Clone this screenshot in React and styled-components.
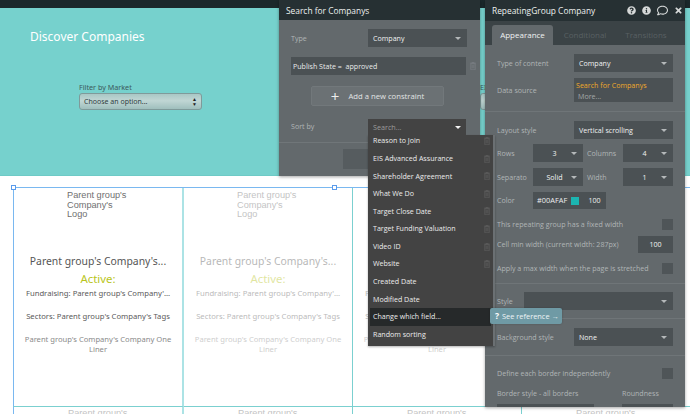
import React from 'react';
import styled, { createGlobalStyle } from 'styled-components';
import { FaQuestionCircle, FaInfoCircle, FaRegComment, FaTimes } from 'react-icons/fa';

const Global = createGlobalStyle`
  html, body { margin: 0; padding: 0; background: #fff; }
  body { width: 690px; height: 414px; overflow: hidden; font-family: "Open Sans", sans-serif; }
  * { box-sizing: border-box; }
`;

const Page = styled.div`
  position: relative;
  width: 690px;
  height: 414px;
  overflow: hidden;
  background: #fff;
`;
const TopBar = styled.div`height: 8px; background: #1b282b;`;
const Hero = styled.header`
  height: 168px;
  background: #76d1cd;
  border-bottom: 1px solid #6ecac6;
  padding: 20px 0 0 30px;
`;
const HeroTitle = styled.h1`
  margin: 0;
  font: 400 12px/18px "Noto Sans", sans-serif;
  color: #fff;
`;
const Filters = styled.div`
  display: flex;
  gap: 278px;
  margin: 36px 0 0 49px;
`;
const Filter = styled.div`width: 123px; flex: none;`;
const FilterLabel = styled.div`
  font: 7.2px/11px "Noto Sans", sans-serif;
  color: #3c5a5c;
  height: 11px;
`;
const FakeSelect = styled.div`
  height: 17px;
  border: 1px solid #7f9a9a;
  border-radius: 3px;
  background: linear-gradient(#a9c7c5, #c0d6d4 45%, #9fbfbd);
  font: 7px/15px "Noto Sans", sans-serif;
  color: #2f3d3e;
  padding: 0 4px;
  display: flex;
  justify-content: space-between;
`;
const Spinner = styled.span`
  font-size: 5px;
  line-height: 5px;
  padding-top: 3px;
  color: #222;
  text-align: center;
`;
const Grid = styled.section`
  position: relative;
  margin: 11px 0 0 13px;
  width: 678px;
  display: grid;
  grid-template-columns: 171px 169px 169px 169px;
  border-top: 1px solid #7ab8f0;
`;
const Cell = styled.article`
  height: 219px;
  border-right: ${p => (p.$thick ? '2px solid #ace3e5' : '1px solid #7bd0d0')};
  border-left: ${p => (p.$first ? '1px solid #7ab8f0' : '0')};
  border-bottom: 1px solid #7bd0d0;
  display: flex;
  flex-direction: column;
  align-items: center;
  text-align: center;
  padding: 3px 8px 0 8px;
  & > * { opacity: ${p => p.$dim}; }
`;
const Logo = styled.div`
  align-self: flex-start;
  margin-left: 45px;
  width: 66px;
  text-align: left;
  font: 9.2px/9.6px "Liberation Sans", sans-serif;
  color: #707070;
`;
const CellTitle = styled.div`
  margin-top: 33px;
  font: 10.4px/16px "Noto Sans", sans-serif;
  color: #555;
  white-space: nowrap;
`;
const Status = styled.div`
  margin-top: 2px;
  font: 400 11.4px/16px "Noto Sans", sans-serif;
  color: #b9c51c;
`;
const Meta = styled.div`
  margin-top: ${p => p.$mt}px;
  font: 7.7px/11px "Noto Sans", sans-serif;
  color: #5a5a5a;
  white-space: nowrap;
`;
const Liner = styled.div`
  margin-top: 12px;
  font: 7.6px/10px "Noto Sans", sans-serif;
  color: #8a8a8a;
  width: 150px;
`;
const NextRow = styled.div`
  font: 9.2px/10px "Liberation Sans", sans-serif;
  color: #c4c4c4;
  padding: 1px 0 0 54px;
  white-space: nowrap;
  overflow: hidden;
  height: 7px;
  border-right: ${p => (p.$thick ? '2px solid #ace3e5' : '1px solid #7bd0d0')};
  border-left: ${p => (p.$first ? '1px solid #7ab8f0' : '0')};
`;
const Handle = styled.span`
  position: absolute;
  top: -3px;
  left: ${p => p.$x}px;
  width: 5px;
  height: 5px;
  background: #fff;
  border: 1px solid #5a9bec;
`;

const Window = styled.aside`
  position: absolute;
  left: ${p => p.$x}px;
  top: 0;
  width: ${p => p.$w}px;
  height: ${p => p.$h}px;
  background: #63696c;
  box-shadow: 0 1px 3px rgba(0,0,0,.35);
  color: #e8eaea;
  font: 7.1px/11px "Open Sans", sans-serif;
  display: flex;
  flex-direction: column;
`;
const WinHead = styled.div`
  height: ${p => p.$h}px;
  flex: none;
  background: #263033;
  padding-left: ${p => p.$pl}px;
  display: flex;
  align-items: center;
  justify-content: space-between;
  font-size: 8.4px;
  color: #eef0f0;
  white-space: nowrap;
`;
const HeadIcons = styled.div`
  display: flex;
  align-items: center;
  gap: 6px;
  padding-right: 2px;
  color: #d5d8d8;
  font-size: 9px;
  & svg { display: block; }
`;
const Tabs = styled.div`
  height: 24px;
  flex: none;
  background: #3b4346;
  display: flex;
  align-items: flex-end;
  padding-left: 7px;
`;
const Tab = styled.div`
  height: 20px;
  width: ${p => p.$w}px;
  text-align: center;
  line-height: 20px;
  font-size: 8px;
  border-radius: 3px 3px 0 0;
  background: ${p => (p.$on ? '#63696c' : 'transparent')};
  color: ${p => (p.$on ? '#f0f2f2' : '#596063')};
`;
const Body = styled.div`
  flex: 1;
  padding: 0 12px;
  overflow: hidden;
`;
const Row = styled.div`
  display: flex;
  align-items: center;
  justify-content: space-between;
  margin-top: ${p => p.$mt || 0}px;
  height: ${p => p.$h || 18}px;
`;
const QuadRow = styled.div`
  display: grid;
  grid-template-columns: 36px 50px 40px 50px;
  align-items: center;
  margin-top: ${p => p.$mt || 0}px;
  height: 18px;
`;
const Label = styled.span`
  color: #b0b5b6;
  white-space: nowrap;
`;
const SecondLabel = styled(Label)`padding-left: 4px;`;
const ColorLabel = styled(Label)`width: 36px; flex: none;`;
const Control = styled.div`
  flex: none;
  width: ${p => p.$w}px;
  height: ${p => p.$h || 18}px;
  background: #4b5154;
  color: #f1f2f2;
  display: flex;
  align-items: center;
  justify-content: ${p => (p.$center ? 'center' : 'space-between')};
  padding: 0 ${p => (p.$center ? 0 : 6)}px 0 ${p => (p.$center ? 0 : 5)}px;
  white-space: nowrap;
`;
const Caret = styled.i`
  display: block;
  width: 0;
  height: 0;
  border-left: 3px solid transparent;
  border-right: 3px solid transparent;
  border-top: 3px solid ${p => p.$c || '#b4b8b9'};
`;
const CenterVal = styled.span`flex: 1; text-align: center;`;
const Source = styled.div`
  width: 99px;
  height: 24px;
  flex: none;
  background: #4b5154;
  padding: 2px 2px;
  line-height: 10.5px;
  white-space: nowrap;
`;
const Orange = styled.div`color: #f0a92b;`;
const More = styled.div`color: #a3a8a9; padding-left: 2px;`;
const Divider = styled.div`
  height: 1px;
  background: #6f7578;
  margin: ${p => p.$mt}px -12px 0;
`;
const Check = styled.div`width: 11px; height: 11px; background: #4f5558; flex: none;`;
const ColorWrap = styled.div`display: flex; flex: 1; height: 17px; align-items: center;`;
const Hex = styled.div`
  width: 50px; height: 17px; background: #4b5154; color: #eee; display: flex; align-items: center;
  justify-content: space-between; padding: 0 4px; font-size: 7.4px;
`;
const Swatch = styled.i`width: 8px; height: 8px; background: #1cb5b1; display: block; flex: none;`;
const Opacity = styled.div`
  width: 23px; height: 17px; background: #4b5154; color: #eee; text-align: center; line-height: 17px;
`;
const BorderRow = styled.div`
  display: grid;
  grid-template-columns: 125px 51px;
  align-items: center;
  margin-top: ${p => p.$mt}px;
  height: ${p => p.$h}px;
`;
const Stub = styled.div`height: 8px; width: ${p => p.$w}px; background: #4b5154;`;

const Constraint = styled.div`
  height: 18px;
  background: #4b5154;
  width: 175px;
  flex: none;
  padding-left: 2px;
  line-height: 18px;
  white-space: nowrap;
`;
const ConstraintRow = styled.div`display: flex; align-items: center; gap: 4px; margin-top: 10px;`;
const AddButton = styled.div`
  width: 133px;
  height: 20px;
  margin: 11px 0 0 20px;
  background: #6b7174;
  border: 1px solid #72787b;
  border-radius: 2px;
  display: flex;
  align-items: center;
  justify-content: center;
  gap: 9px;
  color: #e2e4e4;
  font-size: 7.7px;
`;
const Plus = styled.span`font-size: 15px; line-height: 14px; color: #eee;`;
const SearchFoot = styled.div`
  border-top: 1px solid #707679;
  margin: 8px -13px 0 -12px;
  padding: 6px 0 0 64px;
`;
const CloseBtn = styled.div`
  width: 70px;
  height: 20px;
  background: #565c5f;
  text-align: center;
  line-height: 20px;
  color: #eee;
`;
const SearchBody = styled.div`flex: 1; padding: 0 13px 0 12px;`;
const TrashBox = styled.svg`flex: none; display: block;`;

const SortBox = styled.div`
  position: absolute;
  left: 368px;
  top: 119px;
  width: 98px;
  height: 16px;
  background: #434343;
  color: #9b9b9b;
  display: flex;
  align-items: center;
  justify-content: space-between;
  padding: 0 5px;
  font: 7.2px/11px "Open Sans", sans-serif;
`;
const ListMenu = styled.ul`
  position: absolute;
  left: 368px;
  top: 135px;
  width: 127px;
  height: 211px;
  margin: 0;
  padding: 0;
  list-style: none;
  background: #434343;
  box-shadow: 0 1px 2px rgba(0,0,0,.3);
  border-right: 2px solid #6b7073;
  font: 7.1px/17.6px "Open Sans", sans-serif;
  color: #ececec;
  & > li:first-child { margin-top: -2.7px; }
`;
const ListItem = styled.li`
  height: 17.6px;
  padding: 0 3px 0 ${p => (p.$on ? 3 : 5)}px;
  margin: 0 ${p => (p.$on ? 2 : 0)}px;
  display: flex;
  align-items: center;
  justify-content: space-between;
  background: ${p => (p.$on ? '#26292a' : 'transparent')};
  white-space: nowrap;
`;
const Tip = styled.div`
  position: absolute;
  left: 490px;
  top: 308px;
  width: 72px;
  height: 16px;
  background: #6f9aa5;
  border-radius: 2px;
  color: #eef4f5;
  font: 7.4px/16px "Open Sans", sans-serif;
  padding-left: 5px;
  white-space: nowrap;
  box-shadow: 0 0 2px rgba(0,0,0,.25);
`;
const TipQ = styled.b`color: #fff; margin-right: 3px; font-size: 8.5px;`;

const Trash = ({ c = '#626262' }) => (
  <TrashBox width="6" height="8" viewBox="0 0 6 8">
    <path d="M0 1.2h6M2 1.2V.3h2v.9M.8 1.8h4.4v6H.8zM2.2 3v3.4M3.8 3v3.4" fill="none" stroke={c} strokeWidth=".7" />
  </TrashBox>
);

const cells = [
  { dim: 1, thick: true, first: true },
  { dim: 0.42 },
  { dim: 0.42 },
  { dim: 0.42 },
];
const fields = ['Reason to Join', 'EIS Advanced Assurance', 'Shareholder Agreement', 'What We Do', 'Target Close Date', 'Target Funding Valuation', 'Video ID', 'Website'];

export default function App() {
  return (
    <Page>
      <Global />
      <TopBar />
      <Hero>
        <HeroTitle>Discover Companies</HeroTitle>
        <Filters>
          <Filter>
            <FilterLabel>Filter by Market</FilterLabel>
            <FakeSelect>Choose an option...<Spinner>▲<br />▼</Spinner></FakeSelect>
          </Filter>
          <Filter>
            <FilterLabel>EIS</FilterLabel>
            <FakeSelect>Choose an option...</FakeSelect>
          </Filter>
        </Filters>
      </Hero>
      <Grid>
        <Handle $x={-2} />
        <Handle $x={319} />
        {cells.map((c, i) => (
          <Cell key={i} $dim={c.dim} $thick={c.thick} $first={c.first}>
            <Logo>Parent group's Company's Logo</Logo>
            <CellTitle>Parent group's Company's...</CellTitle>
            <Status>Active:</Status>
            <Meta $mt={1}>Fundraising: Parent group's Company'...</Meta>
            <Meta $mt={12}>Sectors: Parent group's Company's Tags</Meta>
            <Liner>Parent group's Company's Company One Liner</Liner>
          </Cell>
        ))}
        {cells.map((c, i) => (
          <NextRow key={i} $thick={c.thick} $first={c.first}>Parent group's</NextRow>
        ))}
      </Grid>

      <Window $x={279} $w={201} $h={176}>
        <WinHead $h={20} $pl={7}>Search for Companys</WinHead>
        <SearchBody>
          <Row $mt={9}>
            <Label>Type</Label>
            <Control $w={99}>Company<Caret /></Control>
          </Row>
          <ConstraintRow>
            <Constraint>Publish State =&nbsp; approved</Constraint>
            <Trash c="#7d8386" />
          </ConstraintRow>
          <AddButton><Plus>+</Plus>Add a new constraint</AddButton>
          <Row $mt={12} $h={16}>
            <Label>Sort by</Label>
          </Row>
          <SearchFoot><CloseBtn>Close</CloseBtn></SearchFoot>
        </SearchBody>
      </Window>

      <Window $x={485} $w={200} $h={407}>
        <WinHead $h={21} $pl={7}>
          RepeatingGroup Company
          <HeadIcons>
            <FaQuestionCircle />
            <FaInfoCircle />
            <FaRegComment size={11} />
            <FaTimes />
          </HeadIcons>
        </WinHead>
        <Tabs>
          <Tab $on $w={61}>Appearance</Tab>
          <Tab $w={64}>Conditional</Tab>
          <Tab $w={58}>Transitions</Tab>
        </Tabs>
        <Body>
          <Row $mt={9}><Label>Type of content</Label><Control $w={99}>Company<Caret /></Control></Row>
          <Row $mt={6} $h={24}>
            <Label>Data source</Label>
            <Source><Orange>Search for Companys</Orange><More>More...</More></Source>
          </Row>
          <Divider $mt={9} />
          <Row $mt={9}><Label>Layout style</Label><Control $w={99}>Vertical scrolling<Caret /></Control></Row>
          <QuadRow $mt={5}>
            <Label>Rows</Label>
            <Control $w={50}><CenterVal>3</CenterVal><Caret /></Control>
            <SecondLabel>Columns</SecondLabel>
            <Control $w={50}><CenterVal>4</CenterVal><Caret /></Control>
          </QuadRow>
          <QuadRow $mt={6}>
            <Label>Separato</Label>
            <Control $w={50}><CenterVal>Solid</CenterVal><Caret /></Control>
            <SecondLabel>Width</SecondLabel>
            <Control $w={50}><CenterVal>1</CenterVal><Caret /></Control>
          </QuadRow>
          <Row $mt={6} $h={17}>
            <ColorLabel>Color</ColorLabel>
            <ColorWrap>
              <Hex>#00AFAF<Swatch /></Hex>
              <Opacity>100</Opacity>
            </ColorWrap>
          </Row>
          <Row $mt={8} $h={14}><Label>This repeating group has a fixed width</Label><Check /></Row>
          <Row $mt={5} $h={17}><Label>Cell min width (current width: 287px)</Label><Control $w={35} $center $h={17}>100</Control></Row>
          <Row $mt={8} $h={14}><Label>Apply a max width when the page is stretched</Label><Check /></Row>
          <Divider $mt={8} />
          <Row $mt={8}><Label>Style</Label><Control $w={149}><span /><Caret /></Control></Row>
          <Divider $mt={8} />
          <Row $mt={9}><Label>Background style</Label><Control $w={99}>None<Caret /></Control></Row>
          <Divider $mt={9} />
          <Row $mt={10} $h={14}><Label>Define each border independently</Label><Check /></Row>
          <BorderRow $mt={6} $h={14}>
            <Label>Border style - all borders</Label>
            <Label>Roundness</Label>
          </BorderRow>
          <BorderRow $mt={4} $h={8}>
            <Stub $w={97} />
            <Stub $w={51} />
          </BorderRow>
        </Body>
      </Window>

      <ListMenu>
        {fields.map(f => (
          <ListItem key={f}>{f}<Trash /></ListItem>
        ))}
        <ListItem>Created Date</ListItem>
        <ListItem>Modified Date</ListItem>
        <ListItem $on>Change which field...</ListItem>
        <ListItem>Random sorting</ListItem>
      </ListMenu>
      <SortBox>Search...<Caret $c="#f4f4f4" /></SortBox>
      <Tip><TipQ>?</TipQ>See reference →</Tip>
    </Page>
  );
}
